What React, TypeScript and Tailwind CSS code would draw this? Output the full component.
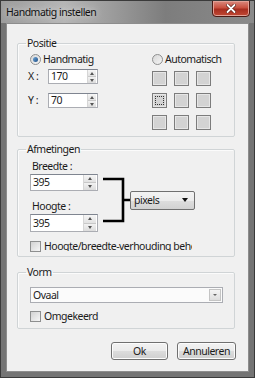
import React from "react";

function Spin({ h, sw }: { h: number; sw: number }) {
  return (
    <div
      className="flex flex-col border-l border-[#d6d6d6]"
      style={{ width: sw, height: h - 2 }}
    >
      <div className="flex-1 flex items-center justify-center bg-gradient-to-b from-[#f6f6f6] to-[#e2e2e2] border-b border-[#c8c8c8]">
        <div className="w-0 h-0 border-l-[2.5px] border-r-[2.5px] border-b-[3px] border-l-transparent border-r-transparent border-b-[#555]" />
      </div>
      <div className="flex-1 flex items-center justify-center bg-gradient-to-b from-[#f2f2f2] to-[#dcdcdc]">
        <div className="w-0 h-0 border-l-[2.5px] border-r-[2.5px] border-t-[3px] border-l-transparent border-r-transparent border-t-[#555]" />
      </div>
    </div>
  );
}

function SpinInput({ value, w, h, sw }: { value: string; w: number; h: number; sw: number }) {
  return (
    <div
      className="flex items-stretch bg-white border border-[#abadb3] border-t-[#7f8590]"
      style={{ width: w, height: h }}
    >
      <div className="flex-1 flex items-center pl-[2px] text-[10.5px] leading-none">{value}</div>
      <div className="flex items-center pr-[1px]">
        <Spin h={h} sw={sw} />
      </div>
    </div>
  );
}

function Square({ focus }: { focus?: boolean }) {
  return (
    <div className="w-[15px] h-[15px] border border-[#7c7c7c] bg-[#d3d3d3] flex items-center justify-center shadow-[inset_0_0_0_1px_#e6e6e6]">
      {focus && <div className="w-[9px] h-[9px] border border-dotted border-[#333]" />}
    </div>
  );
}

function Radio({ checked }: { checked?: boolean }) {
  return (
    <div className="w-[11px] h-[11px] rounded-full border border-[#8e8f8f] bg-gradient-to-br from-[#d8d8d8] to-[#f4f4f4] flex items-center justify-center">
      {checked && (
        <div className="w-[5px] h-[5px] rounded-full bg-gradient-to-br from-[#6fa7d8] to-[#1f4f86]" />
      )}
    </div>
  );
}

function Check() {
  return (
    <div className="w-[11px] h-[11px] shrink-0 border border-[#8e8f8f] bg-gradient-to-br from-[#d2d2d2] to-[#f6f6f6]" />
  );
}

function Group({
  label,
  className,
  children,
}: {
  label: string;
  className?: string;
  children: React.ReactNode;
}) {
  return (
    <fieldset className={"border border-[#d0d4d6] rounded-[2px] shadow-[inset_1px_1px_0_#fbfbfb] " + (className ?? "")}>
      <legend className="ml-[8px] px-[1px] text-[10.5px] leading-[14px]">{label}</legend>
      {children}
    </fieldset>
  );
}

function Button({ label, w }: { label: string; w: number }) {
  return (
    <div
      className="h-[18px] rounded-[3px] border border-[#707070] flex items-center justify-center text-[10.5px] leading-none bg-[linear-gradient(#f2f2f2_0%,#ebebeb_50%,#dddddd_50%,#cfcfcf_100%)] shadow-[inset_0_0_0_1px_#fcfcfc]"
      style={{ width: w }}
    >
      {label}
    </div>
  );
}

export default function App() {
  return (
    <div className="w-[255px] h-[378px] bg-[#747474] border border-[#3a3a3a] flex flex-col overflow-hidden font-['Noto_Sans',sans-serif] text-[#1b1b1b] tracking-[-0.5px]">
      {/* title bar */}
      <div className="h-[22px] flex items-start bg-[linear-gradient(90deg,#9c9c9c_0%,#b6b6b6_25%,#9a9a9a_45%,#7d7d7d_65%,#8a8a8a_100%)]">
        <div className="pl-[5px] pt-[6px] text-[10.5px] leading-none text-[#111] [text-shadow:0_0_6px_#e6e6e6]">
          Handmatig instellen
        </div>
        <div className="ml-auto mr-[4px] w-[38px] h-[17px] -mt-[1px] rounded-b-[4px] border border-[#4a1a14] bg-[linear-gradient(#d98a7f_0%,#c8503f_45%,#a72d1f_55%,#c14a35_100%)] flex items-center justify-center shadow-[inset_0_0_0_1px_#e2a196]">
          <svg width="10" height="9" viewBox="0 0 10 9">
            <path d="M1.5 1 L8.5 8 M8.5 1 L1.5 8" stroke="#5a1c14" strokeWidth="3.2" strokeLinecap="round" />
            <path d="M1.5 1 L8.5 8 M8.5 1 L1.5 8" stroke="#ffffff" strokeWidth="1.8" strokeLinecap="round" />
          </svg>
        </div>
      </div>

      {/* client area */}
      <div className="mx-[5px] mb-[5px] flex-1 bg-[#f0f0f0] border border-[#8d8d8d] flex flex-col pl-[10px] pr-[13px] pt-[12px]">
        <Group label="Positie" className="h-[101px]">
          <div className="flex pt-[2px]">
            <div className="w-[134px] pl-[10px] flex flex-col">
              <div className="flex items-center h-[14px] ml-[2px] gap-[2px]">
                <Radio checked />
                <span className="text-[10.5px] leading-none">Handmatig</span>
              </div>
              <div className="flex items-center mt-[3px] h-[15px]">
                <span className="w-[20px] text-[10.5px] leading-none">X :</span>
                <SpinInput value="170" w={50} h={15} sw={9} />
              </div>
              <div className="flex items-center mt-[9px] h-[15px]">
                <span className="w-[20px] text-[10.5px] leading-none">Y :</span>
                <SpinInput value="70" w={50} h={15} sw={9} />
              </div>
            </div>
            <div className="flex flex-col">
              <div className="flex items-center h-[14px] gap-[2px]">
                <Radio />
                <span className="text-[10.5px] leading-none">Automatisch</span>
              </div>
              <div className="mt-[5px] grid grid-cols-[15px_15px_15px] gap-x-[7px] gap-y-[7px]">
                <Square />
                <Square />
                <Square />
                <Square focus />
                <Square />
                <Square />
                <Square />
                <Square />
                <Square />
              </div>
            </div>
          </div>
        </Group>

        <Group label="Afmetingen" className="mt-[5px] h-[115px]">
          <div className="flex pl-[12px] pt-[3px]">
            <div className="flex flex-col">
              <div className="pl-[2px] h-[14px] flex items-center text-[10.5px] leading-none">Breedte :</div>
              <div className="mt-[1px]">
                <SpinInput value="395" w={68} h={17} sw={13} />
              </div>
              <div className="pl-[2px] mt-[8px] h-[14px] flex items-center text-[10.5px] leading-none">Hoogte :</div>
              <div className="mt-[1px]">
                <SpinInput value="395" w={68} h={18} sw={13} />
              </div>
            </div>
            <div className="mt-[18px] flex items-center h-[46px]">
              <svg width="28" height="46" viewBox="0 0 28 46" className="ml-[4px]">
                <path d="M1 2 H21 V44 H1 M21 23 H28" stroke="#000" strokeWidth="2.6" fill="none" />
              </svg>
              <div className="w-[65px] h-[19px] border border-[#707070] rounded-[2px] bg-[linear-gradient(#f3f3f3_0%,#ececec_50%,#dedede_50%,#d2d2d2_100%)] flex items-center pl-[3px] pr-[6px] text-[10.5px] leading-none">
                <span>pixels</span>
                <div className="ml-auto w-0 h-0 border-l-[3.5px] border-r-[3.5px] border-t-[4px] border-l-transparent border-r-transparent border-t-[#111]" />
              </div>
            </div>
          </div>
          <div className="flex items-center pl-[12px] mt-[8px] gap-[3px] h-[12px]">
            <Check />
            <span className="w-[148px] overflow-hidden whitespace-nowrap text-[10.5px] leading-none">
              Hoogte/breedte-verhouding behouden
            </span>
          </div>
        </Group>

        <Group label="Vorm" className="mt-[8px] h-[64px]">
          <div className="pl-[12px] pt-[8px] pr-[11px]">
            <div className="h-[16px] bg-[#fbfbfb] border border-[#abadb3] flex items-center pl-[2px] pr-[1px] text-[10.5px] leading-none">
              <span>Ovaal</span>
              <div className="ml-auto w-[12px] h-[12px] border border-[#c4c4c4] bg-gradient-to-b from-[#f5f5f5] to-[#dedede] flex items-center justify-center">
                <div className="w-0 h-0 border-l-[2px] border-r-[2px] border-t-[2.5px] border-l-transparent border-r-transparent border-t-[#666]" />
              </div>
            </div>
            <div className="flex items-center mt-[8px] gap-[3px] h-[11px]">
              <Check />
              <span className="text-[10.5px] leading-none">Omgekeerd</span>
            </div>
          </div>
        </Group>

        <div className="flex justify-end gap-[9px] mt-[13px] -mr-[1px]">
          <Button label="Ok" w={57} />
          <Button label="Annuleren" w={59} />
        </div>
      </div>
    </div>
  );
}
